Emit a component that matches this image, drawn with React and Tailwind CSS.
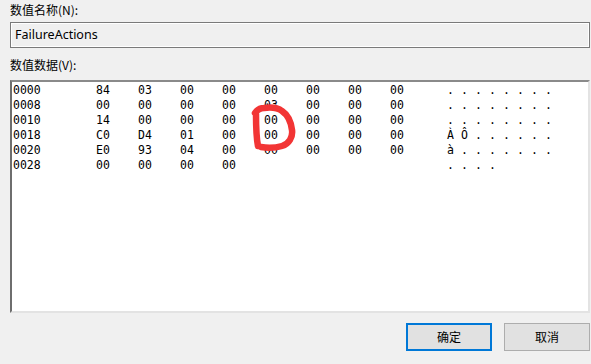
const rows = [
  { addr: '0000', hex: ['84', '03', '00', '00', '00', '00', '00', '00'], ascii: ['.', '.', '.', '.', '.', '.', '.', '.'] },
  { addr: '0008', hex: ['00', '00', '00', '00', '03', '00', '00', '00'], ascii: ['.', '.', '.', '.', '.', '.', '.', '.'] },
  { addr: '0010', hex: ['14', '00', '00', '00', '00', '00', '00', '00'], ascii: ['.', '.', '.', '.', '.', '.', '.', '.'] },
  { addr: '0018', hex: ['C0', 'D4', '01', '00', '00', '00', '00', '00'], ascii: ['À', 'Ô', '.', '.', '.', '.', '.', '.'] },
  { addr: '0020', hex: ['E0', '93', '04', '00', '00', '00', '00', '00'], ascii: ['à', '.', '.', '.', '.', '.', '.', '.'] },
  { addr: '0028', hex: ['00', '00', '00', '00'], ascii: ['.', '.', '.', '.'] },
];

const HexRow = ({ row }) => (
  <div className="flex h-[15px] items-center leading-[15px]">
    <span className="w-[84px] shrink-0 pl-px">{row.addr}</span>
    {Array.from({ length: 8 }).map((_, i) => (
      <span key={i} className="w-[42px] shrink-0">{row.hex[i] || ''}</span>
    ))}
    <div className="ml-[15px] flex">
      {row.ascii.map((c, i) => (
        <span key={i} className="w-[14px] shrink-0">{c}</span>
      ))}
    </div>
  </div>
);

export default function App() {
  return (
    <div className="w-[591px] h-[364px] overflow-hidden bg-[#f0f0f0] pl-[10px] pr-px flex flex-col text-[12px] text-black font-['Microsoft_YaHei','Noto_Sans_CJK_SC',sans-serif]">
      <div className="h-[20px] pt-[1px] leading-[18px]">数值名称(N):</div>
      <div className="mt-[2px] h-[26px] border border-[#7a7a7a] shadow-[inset_0_0_0_1px_#ffffff] flex items-center pl-[4px] font-['Segoe_UI','Noto_Sans',sans-serif] text-[12.5px]">
        FailureActions
      </div>
      <div className="mt-[8px] h-[20px] leading-[18px]">数值数据(V):</div>
      <div className="relative mt-[4px] h-[233px] bg-white border-t-2 border-l-2 border-t-[#8a8a8a] border-l-[#6e6e6e] border-r-2 border-b-2 border-r-[#e3e3e3] border-b-[#e3e3e3] pt-[1px] font-['DejaVu_Sans_Mono',monospace] text-[11.5px]">
        {rows.map((r) => (
          <HexRow key={r.addr} row={r} />
        ))}
        <svg className="absolute left-[239px] top-[22px]" width="46" height="48" viewBox="0 0 46 48" fill="none">
          <path
            d="M4 9 C 6 6, 9 4, 13 4 C 20 3, 27 4, 31 7 C 37 11, 40 18, 41 26 C 42 33, 38 40, 31 42 C 24 44, 16 44, 10 43 M5 10 C 5 20, 5 32, 7 42"
            stroke="#f23535"
            strokeWidth="6.5"
            strokeLinecap="round"
            strokeLinejoin="round"
          />
        </svg>
      </div>
      <div className="mt-[10px] flex justify-end gap-[12px]">
        <button className="w-[86px] h-[28px] bg-[#e1e1e1] border-2 border-[#0078d7]">确定</button>
        <button className="w-[86px] h-[28px] bg-[#e1e1e1] border border-[#adadad]">取消</button>
      </div>
    </div>
  );
}
